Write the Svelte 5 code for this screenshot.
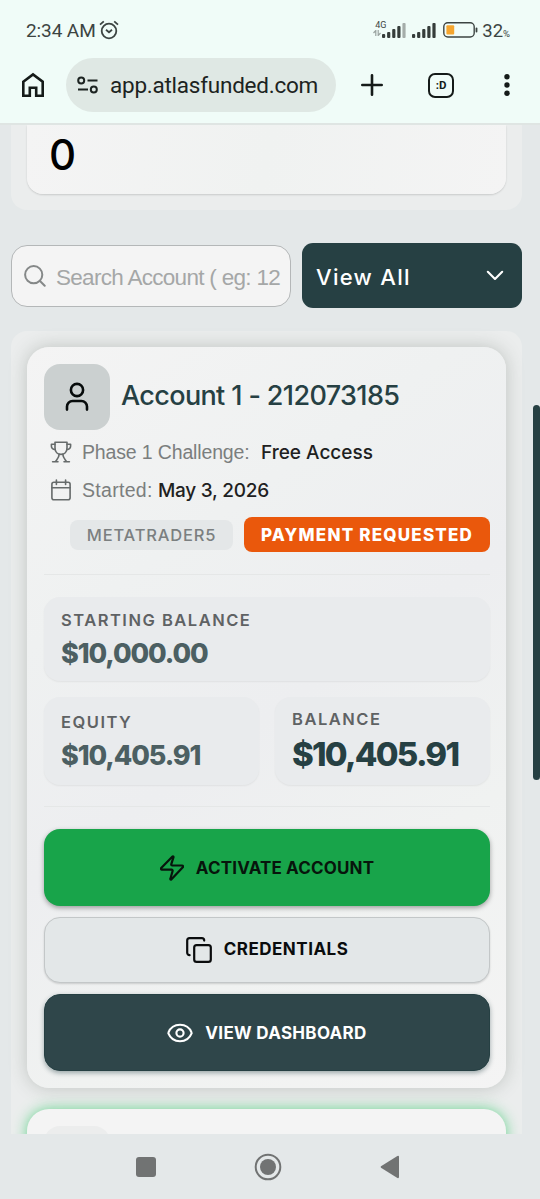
<script lang="ts">
	interface Stat {
		key: string;
		label: string;
		value: string;
	}

	const account = {
		title: 'Account 1 - 212073185',
		challenge: 'Free Access',
		started: 'May 3, 2026',
		platform: 'METATRADER5',
		status: 'PAYMENT REQUESTED'
	};

	const stats: Stat[] = [
		{ key: 'starting', label: 'STARTING BALANCE', value: '$10,000.00' },
		{ key: 'equity', label: 'EQUITY', value: '$10,405.91' },
		{ key: 'balance', label: 'BALANCE', value: '$10,405.91' }
	];

	const bars = [4, 6, 9, 12, 15];
</script>

<div class="phone">
	<header class="chrome">
		<div class="status-bar">
			<span class="time">2:34 AM</span>
			<svg class="alarm" width="20" height="20" viewBox="0 0 20 20" fill="none" stroke="#3c4442" stroke-width="1.8">
				<circle cx="10" cy="11" r="7.3" />
				<path d="M1 4.6 4.8 1.4M15.2 1.4 19 4.6" />
				<path d="M7 9.8 10 12.3 13 9.8" />
			</svg>

			<div class="signals">
				<div class="network">
					<span>4G</span>
					<svg width="8" height="6" viewBox="0 0 8 6" fill="none" stroke="#9aa3a0" stroke-width="1.2">
						<path d="M2.8 6V.5L.5 3M5.2 0v5.5L7.5 3" />
					</svg>
				</div>
				{#each [0, 1] as sim}
					<svg class="signal sim-{sim}" width="24" height="15" viewBox="0 0 24 15">
						{#each bars as h, i}
							<rect
								x={i * 5.1}
								y={15 - h}
								width="3.2"
								height={h}
								rx="1"
								fill={sim === 0 && i === 4 ? '#a5adaa' : '#353c3a'}
							/>
						{/each}
					</svg>
				{/each}
				<svg class="battery" width="35" height="16" viewBox="0 0 35 16">
					<rect x="0.8" y="0.8" width="30.4" height="14.2" rx="4" fill="none" stroke="#3c4442" stroke-width="1.4" />
					<rect x="3.4" y="3.2" width="7.8" height="9.4" rx="1" fill="#f5a52e" />
					<rect x="32.6" y="5.5" width="1.8" height="5" rx="0.9" fill="#3c4442" />
				</svg>
				<span class="percent">32<small>%</small></span>
			</div>
		</div>

		<div class="toolbar">
			<svg class="home" width="24" height="26" viewBox="0 0 24 26" fill="none" stroke="#151b19" stroke-width="2.6">
				<path d="M2.3 9.7 12 2.4 21.7 9.7V23.7H15.2V15.8H8.8V23.7H2.3Z" />
			</svg>
			<div class="url">
				<svg width="22" height="18" viewBox="0 0 22 18" fill="none" stroke="#1c2321" stroke-width="2">
					<circle cx="4.2" cy="4.4" r="3" />
					<path d="M10.5 4.4H20.5M1 13.4H11" />
					<circle cx="16.8" cy="13.4" r="3" />
				</svg>
				<span>app.atlasfunded.com</span>
			</div>
			<svg class="plus" width="22" height="22" viewBox="0 0 22 22" stroke="#151b19" stroke-width="2.6" stroke-linecap="round">
				<path d="M11 1.3V20.7M1.3 11H20.7" />
			</svg>
			<div class="tabs">:D</div>
			<svg class="more" width="6" height="22" viewBox="0 0 6 22" fill="#151b19">
				<circle cx="3" cy="2.8" r="2.7" />
				<circle cx="3" cy="11" r="2.7" />
				<circle cx="3" cy="19.2" r="2.7" />
			</svg>
		</div>
	</header>

	<main class="page">
		<section class="panel summary">
			<div class="summary-card">0</div>
		</section>

		<div class="filters">
			<div class="search">
				<svg width="22" height="22" viewBox="0 0 22 22" fill="none" stroke="#858888" stroke-width="2" stroke-linecap="round">
					<circle cx="9.7" cy="9.7" r="8.6" />
					<path d="M16 16 20.7 20.7" />
				</svg>
				<div class="placeholder">Search Account ( eg: 12</div>
			</div>
			<div class="select">
				<span>View All</span>
				<svg width="18" height="11" viewBox="0 0 18 11" fill="none" stroke="#fff" stroke-width="2.1" stroke-linecap="round" stroke-linejoin="round">
					<path d="M1.8 1.8 9 9 16.2 1.8" />
				</svg>
			</div>
		</div>

		<section class="panel accounts">
			<article class="card">
				<div class="card-head">
					<div class="avatar">
						<svg width="24" height="30" viewBox="0 0 24 30" fill="none" stroke="#070b0b" stroke-width="2.6" stroke-linecap="round">
							<circle cx="12" cy="8" r="6.1" />
							<path d="M2 27.6V24.6A5.6 5.6 0 0 1 7.6 19H16.4A5.6 5.6 0 0 1 22 24.6V27.6" />
						</svg>
					</div>
					<h2>{account.title}</h2>
				</div>

				<div class="meta">
					<svg width="22" height="22" viewBox="0 0 22 22" fill="none" stroke="#666b6b" stroke-width="1.6" stroke-linecap="round" stroke-linejoin="round">
						<path d="M5 1.3H17V7C17 11 14.3 13.4 11 13.4S5 11 5 7Z" />
						<path d="M5 3.2H1.4V5.3A3.2 3.2 0 0 0 5.2 8.4M17 3.2H20.6V5.3A3.2 3.2 0 0 1 16.8 8.4" />
						<path d="M9.2 13.4C9 16.6 7.4 17.8 5.4 20.6M12.8 13.4C13 16.6 14.6 17.8 16.6 20.6M2.6 20.8H8M14 20.8H19.4" />
					</svg>
					<span class="meta-label challenge">Phase 1 Challenge:</span>
					<span class="meta-value access">{account.challenge}</span>
				</div>
				<div class="meta">
					<svg width="22" height="22" viewBox="0 0 22 22" fill="none" stroke="#666b6b" stroke-width="1.6" stroke-linecap="round" stroke-linejoin="round">
						<rect x="1.9" y="3.2" width="18.2" height="17.6" rx="2" />
						<path d="M1.9 8.8H20.1M6.4 1V5.4M15.6 1V5.4" />
					</svg>
					<span class="meta-label started">Started:</span>
					<span class="meta-value date">{account.started}</span>
				</div>

				<div class="badges">
					<span class="badge platform">{account.platform}</span>
					<span class="badge payment">{account.status}</span>
				</div>

				<hr />

				<div class="stats">
					{#each stats as stat (stat.key)}
						<div class="stat {stat.key}">
							<div class="stat-label">{stat.label}</div>
							<div class="stat-value">{stat.value}</div>
						</div>
					{/each}
				</div>

				<hr class="second" />

				<div class="actions">
					<button class="activate">
						<svg width="24" height="26" viewBox="0 0 24 26" fill="none" stroke="currentColor" stroke-width="2.2" stroke-linejoin="round">
							<path d="M2 14.7A1 1 0 0 1 1.2 13L12.5 1.6A.6.6 0 0 1 13.5 2.1L11.3 9.2A1 1 0 0 0 12.3 10.5H22A1 1 0 0 1 22.8 12.2L11.5 24.3A.6.6 0 0 1 10.4 23.8L12.6 16A1 1 0 0 0 11.6 14.7Z" />
						</svg>
						<span>ACTIVATE ACCOUNT</span>
					</button>
					<button class="credentials">
						<svg width="26" height="26" viewBox="0 0 26 26" fill="none" stroke="currentColor" stroke-width="2.2" stroke-linecap="round">
							<rect x="8.2" y="8.2" width="16.6" height="16.6" rx="2.4" />
							<path d="M3.6 18.2A2.4 2.4 0 0 1 1.2 15.8V3.6A2.4 2.4 0 0 1 3.6 1.2H15.8A2.4 2.4 0 0 1 18.2 3.6" />
						</svg>
						<span>CREDENTIALS</span>
					</button>
					<button class="dashboard">
						<svg width="26" height="20" viewBox="0 0 26 20" fill="none" stroke="currentColor" stroke-width="2.1">
							<path d="M1.4 10.4A1 1 0 0 1 1.4 9.6A12.5 12.5 0 0 1 24.6 9.6A1 1 0 0 1 24.6 10.4A12.5 12.5 0 0 1 1.4 10.4Z" />
							<circle cx="13" cy="10" r="3.6" />
						</svg>
						<span>VIEW DASHBOARD</span>
					</button>
				</div>
			</article>

			<article class="card next">
				<div class="avatar"></div>
			</article>
		</section>

		<div class="scroll-thumb"></div>
	</main>

	<nav class="nav-bar">
		<svg width="20" height="20" viewBox="0 0 20 20"><rect width="20" height="20" rx="3" fill="#717373" /></svg>
		<svg width="28" height="28" viewBox="0 0 28 28">
			<circle cx="14" cy="14" r="12.3" fill="none" stroke="#717373" stroke-width="2" />
			<circle cx="14" cy="14" r="8" fill="#717373" />
		</svg>
		<svg width="20" height="24" viewBox="0 0 20 24"><path d="M1 11.2 17.4 1Q19 .4 19 2V22Q19 23.6 17.4 23L1 12.8Q.2 12 1 11.2Z" fill="#717373" /></svg>
	</nav>
</div>

<style>
	:global(body) {
		margin: 0;
		background: #e4e8e9;
	}

	.phone {
		width: 540px;
		height: 1199px;
		display: flex;
		flex-direction: column;
		overflow: hidden;
		font-family: Inter, 'Liberation Sans', sans-serif;
		background: #e4e8e9;
	}

	.phone * {
		box-sizing: border-box;
	}

	svg {
		display: block;
		flex: none;
	}

	/* Browser chrome */
	.chrome {
		flex: none;
		height: 125px;
		background: #f0fcf8;
		border-bottom: 2px solid #dfe5e3;
		font-family: Roboto, sans-serif;
	}

	.status-bar {
		display: flex;
		align-items: center;
		height: 58px;
		padding: 3px 30px 0 26px;
		color: #3c4442;
	}

	.time {
		font-size: 19px;
		letter-spacing: -0.1px;
	}

	.alarm {
		margin: -2px 0 0 3px;
	}

	.signals {
		display: flex;
		align-items: center;
		margin-left: auto;
	}

	.network {
		width: 14px;
		font-size: 9px;
		line-height: 9px;
		margin: -4px -5px 0 0;
	}

	.network span {
		display: block;
		margin-left: 2px;
	}

	.sim-1 {
		margin-left: 6px;
	}

	.battery {
		margin: -1px 4px 0 7px;
	}

	.percent {
		font-size: 18.5px;
		white-space: nowrap;
	}

	.percent small {
		font-size: 9.5px;
	}

	.toolbar {
		display: flex;
		align-items: center;
		height: 54px;
		padding: 0 30px 0 21px;
	}

	.url {
		display: flex;
		align-items: center;
		width: 270px;
		height: 54px;
		margin-left: 21px;
		padding-left: 11px;
		border-radius: 27px;
		background: #dfe8e4;
		color: #1c2321;
		font-size: 22.5px;
		letter-spacing: -0.24px;
	}

	.url span {
		margin-left: 11px;
	}

	.plus {
		margin-left: 25px;
	}

	.tabs {
		width: 26px;
		height: 25px;
		margin-left: 45px;
		border: 2.5px solid #151b19;
		border-radius: 7px;
		font-size: 11.5px;
		font-weight: 700;
		line-height: 20px;
		text-align: center;
		color: #151b19;
	}

	.more {
		margin-left: auto;
	}

	/* Page */
	.page {
		position: relative;
		flex: none;
		height: 1009px;
		padding: 0 18px 0 11px;
		overflow: hidden;
	}

	.panel {
		padding: 0 16px;
		background: #ebeded;
	}

	.summary {
		height: 85px;
		border-radius: 0 0 16px 16px;
	}

	.summary-card {
		height: 69px;
		padding-left: 22px;
		border-radius: 0 0 16px 16px;
		background: linear-gradient(100deg, #f4f4f4, #f0f2f1 50%, #f4f4f4);
		box-shadow: 0 1px 2px rgba(0, 0, 0, 0.15);
		font-size: 42px;
		font-weight: 500;
		line-height: 60px;
		color: #000;
	}

	.filters {
		display: flex;
		align-items: center;
		gap: 11px;
		margin: 33px 0 23px;
	}

	.search {
		display: flex;
		align-items: center;
		width: 280px;
		height: 62px;
		margin-top: 1px;
		padding: 0 11px 0 12px;
		border: 1px solid #b4b7b8;
		border-radius: 16px;
		background: #f4f4f4;
	}

	.placeholder {
		margin: 3px 0 0 10px;
		font-family: 'Liberation Sans', Arial, sans-serif;
		font-size: 22.5px;
		line-height: 30px;
		letter-spacing: -0.7px;
		white-space: nowrap;
		color: #a5a7a7;
	}

	.select {
		display: flex;
		align-items: center;
		justify-content: space-between;
		flex: 1;
		height: 65px;
		padding: 0 18px 0 14px;
		border-radius: 11px;
		background: #264043;
		color: #fff;
		font-size: 22px;
		font-weight: 500;
		letter-spacing: 1.3px;
	}

	.select span {
		margin-top: 2px;
	}

	.accounts {
		height: 830px;
		padding-top: 16px;
		border-radius: 16px 16px 0 0;
	}

	.card {
		height: 741px;
		padding: 17px 16px 17px 17px;
		border-radius: 22px;
		background: linear-gradient(145deg, #f4f4f4, #eff1f1 28%, #edeef0 50%, #f0f2f1 72%, #f4f4f4);
		box-shadow: 0 0 18px rgba(60, 70, 60, 0.25);
	}

	.card-head {
		display: flex;
		align-items: center;
	}

	.avatar {
		display: grid;
		place-items: center;
		width: 66px;
		height: 66px;
		border-radius: 16px;
		background: #cbd0d0;
	}

	h2 {
		margin: -4px 0 0 11px;
		font-size: 27px;
		font-weight: 500;
		letter-spacing: -0.63px;
		white-space: nowrap;
		color: #264043;
	}

	.meta {
		display: flex;
		align-items: center;
		height: 38px;
		padding-left: 6px;
		font-size: 19px;
		white-space: nowrap;
	}

	.card-head + .meta {
		margin-top: 3px;
	}

	.meta-label {
		margin: 1px 0 0 10px;
		font-family: 'Liberation Sans', Arial, sans-serif;
		font-size: 19.5px;
		color: #7b7e7e;
	}

	.challenge {
		width: 167px;
		letter-spacing: -0.15px;
	}

	.started {
		width: 71px;
		letter-spacing: 0.3px;
	}

	.meta-value {
		font-weight: 500;
		color: #1e2121;
	}

	.access {
		margin-left: 12px;
	}

	.date {
		margin-left: 5px;
		letter-spacing: -0.25px;
	}

	.badges {
		display: flex;
		align-items: center;
		justify-content: flex-end;
		gap: 11px;
		height: 35px;
		margin-top: 8px;
	}

	.badge {
		display: flex;
		align-items: center;
		justify-content: center;
		white-space: nowrap;
	}

	.platform {
		width: 163px;
		height: 30px;
		border-radius: 8px;
		background: #e4e7e8;
		color: #7b7f80;
		font-size: 16.5px;
		font-weight: 500;
		letter-spacing: 0.8px;
	}

	.payment {
		width: 246px;
		height: 35px;
		border-radius: 8px;
		background: #ea580c;
		color: #fff;
		font-size: 17px;
		font-weight: 800;
		letter-spacing: 1.2px;
	}

	hr {
		height: 1px;
		margin: 22px 0;
		border: 0;
		background: #e5e7e7;
	}

	hr.second {
		margin-top: 21px;
	}

	.stats {
		display: grid;
		grid-template-columns: 215px 215px;
		grid-template-rows: 84px 88px;
		gap: 16px;
	}

	.stat {
		padding: 13px 17px 0;
		border-radius: 16px;
		background: #e9ebed;
		box-shadow: 0 1px 2px rgba(0, 0, 0, 0.06);
		white-space: nowrap;
	}

	.stat-label {
		font-size: 16.5px;
		font-weight: 600;
		line-height: 24px;
		letter-spacing: 1.5px;
		color: #5f6264;
	}

	.stat-value {
		margin-top: 5px;
		font-size: 27px;
		font-weight: 800;
		line-height: 34px;
		letter-spacing: -1.1px;
		color: #4c5f62;
	}

	.starting {
		grid-column: span 2;
		padding-top: 11px;
	}

	.balance {
		padding-top: 10px;
	}

	.balance .stat-value {
		margin-top: 3px;
		font-size: 33px;
		line-height: 40px;
		letter-spacing: -1.75px;
		color: #264043;
	}

	.actions {
		display: flex;
		flex-direction: column;
		gap: 11px;
	}

	button {
		display: flex;
		align-items: center;
		justify-content: center;
		gap: 12px;
		height: 77px;
		padding: 0;
		border: 0;
		border-radius: 16px;
		font-family: inherit;
		font-size: 17px;
		font-weight: 700;
		white-space: nowrap;
	}

	.activate {
		background: #18a44a;
		color: #07150c;
		letter-spacing: 0.15px;
		box-shadow: 0 2px 5px rgba(0, 0, 0, 0.35);
	}

	.activate span,
	.dashboard span {
		margin-top: 1px;
	}

	.credentials {
		height: 66px;
		border: 1px solid #c3c7c8;
		background: #e3e7e8;
		color: #0a0c0d;
		letter-spacing: 0.5px;
		box-shadow: 0 1px 2px rgba(0, 0, 0, 0.15);
	}

	.credentials span {
		margin-top: -2px;
	}

	.dashboard {
		border: 1px solid #264043;
		background: #2f464a;
		color: #fff;
		letter-spacing: 0.3px;
		box-shadow: 0 2px 5px rgba(20, 50, 55, 0.4);
	}

	.card.next {
		height: 200px;
		margin-top: 21px;
		box-shadow: 0 0 14px rgba(34, 197, 94, 0.65);
		background: #f4f4f4;
	}

	.next .avatar {
		background: #eceded;
	}

	.scroll-thumb {
		position: absolute;
		top: 280px;
		right: 0;
		width: 7px;
		height: 375px;
		border-radius: 4px;
		background: #264043;
	}

	/* System navigation */
	.nav-bar {
		display: flex;
		align-items: center;
		flex: 1;
		padding-left: 136px;
		gap: 98px;
		background: #e4e8e9;
	}
</style>
